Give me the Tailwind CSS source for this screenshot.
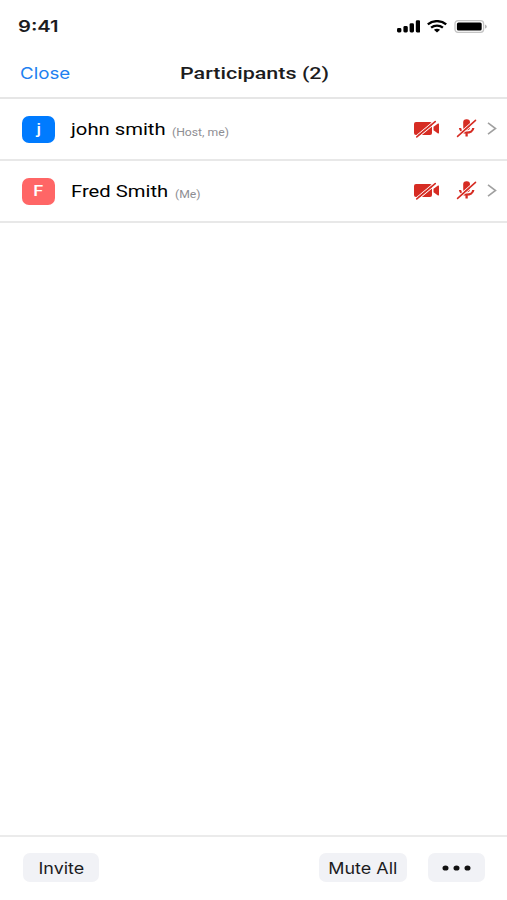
<!DOCTYPE html>
<html lang="en">
<head>
    <meta charset="UTF-8">
    <meta name="viewport" content="width=device-width, initial-scale=1.0">
    <title>Participants</title>
    <script src="https://cdn.jsdelivr.net/npm/@tailwindcss/browser@4"></script>
</head>
<body class="bg-white">
    <div class="flex flex-col w-full h-screen overflow-hidden bg-white font-[Roboto,sans-serif] text-[17px] text-[#1c1c1e]">
        <!-- Status bar -->
        <div class="flex items-center justify-between h-[53px] pl-[18px] pr-[19px] shrink-0">
            <span class="inline-block pb-[2px] origin-left scale-x-[1.26] font-[Inter,sans-serif] text-[16px] font-semibold">9:41</span>
            <div class="flex items-center gap-[7px]">
                <svg class="w-[23px] h-[13px]" viewBox="0 0 23 13" fill="#000">
                    <rect x="0" y="8" width="4.4" height="4.5" rx="1.4" />
                    <rect x="6.4" y="6" width="4.4" height="6.5" rx="1.4" />
                    <rect x="12.6" y="3.2" width="4.4" height="9.3" rx="1.4" />
                    <rect x="18.8" y="0.3" width="4.4" height="12.2" rx="1.4" />
                </svg>
                <svg class="w-[20px] h-[13px]" viewBox="0 0 20 13" fill="none" stroke="#000" stroke-width="2.3">
                    <path d="M0.8 4.4C6 0 14 0 19.2 4.4" />
                    <path d="M4.1 7.7C7.5 4.8 12.5 4.8 15.9 7.7" />
                    <path d="M6.9 9.8C8.8 8.4 11.2 8.4 13.1 9.8L10 12.6Z" fill="#000" stroke="none" />
                </svg>
                <svg class="w-[34px] h-[13px]" viewBox="0 0 34 13">
                    <rect x="1" y="0.7" width="28.6" height="11.6" rx="3" fill="none" stroke="#c4c4c4" stroke-width="1.3" />
                    <rect x="2.9" y="2.4" width="24.8" height="8.2" rx="1.6" fill="#000" />
                    <path d="M31 4.4C33.4 5.2 33.4 7.8 31 8.6Z" fill="#b5b5b5" />
                </svg>
            </div>
        </div>

        <!-- Title bar -->
        <div class="flex items-center h-[46px] pb-[3px] pl-5 shrink-0 border-b-2 border-[#e6e6e6]">
            <div class="w-40">
                <span class="inline-block origin-left scale-x-[1.17] font-[Inter,sans-serif] text-[16px] text-[#2080f0]">Close</span>
            </div>
            <h1 class="origin-left scale-x-[1.265] font-medium">Participants (2)</h1>
        </div>

        <!-- Participants list -->
        <ul class="grow">
            <li class="flex items-center h-[62px] pl-[22px] pr-[10px] border-b-2 border-[#e8e8e8]">
                <div class="flex items-center justify-center w-[33px] h-[27px] pt-px rounded-[7px] bg-[#007bff] text-white text-[15px] font-medium"><span class="scale-x-[1.2]">j</span></div>
                <div class="w-[117px] pl-4 pt-[2px]"><span class="inline-block whitespace-nowrap origin-left scale-x-[1.19] text-black">john smith</span></div>
                <div class="grow pt-[3px]"><span class="inline-block origin-left scale-x-[1.16] text-[10.5px] text-[#8e8e93]">(Host, me)</span></div>
                <svg class="w-[27px] h-5 mr-4 mb-[2px]" viewBox="0 0 27 20">
                    <rect x="1" y="4" width="18" height="13" rx="2" fill="#d62c23" />
                    <path d="M20.5 8.8L25 5.6Q26 5.2 26 6.2V14.8Q26 15.8 25 15.4L20.5 12.2Z" fill="#d62c23" />
                    <path d="M2.9 18.1L21.3 2.9M4.7 19.7L23.2 4.4" stroke="#fff" stroke-width="1.2" />
                    <path d="M3.8 18.9L22.2 3.6" stroke="#d62c23" stroke-width="1.6" stroke-linecap="round" />
                </svg>
                <svg class="w-[21px] h-5 mr-[10px] mb-[2px]" viewBox="0 0 21 20">
                    <rect x="7.2" y="1.2" width="6.8" height="11" rx="3.2" fill="#d62c23" />
                    <path d="M4 10C4.5 16.2 16.8 16.2 17.3 10M10.6 14.5V18.6" fill="none" stroke="#d62c23" stroke-width="2.3" />
                    <path d="M0.7 17.6L18.6 1.6M2.5 19.2L20.4 3.2" stroke="#fff" stroke-width="1.1" />
                    <path d="M1.6 18.4L19.5 2.4" stroke="#d62c23" stroke-width="1.6" stroke-linecap="round" />
                </svg>
                <svg class="w-[10px] h-[13px] mb-[2px]" viewBox="0 0 10 13" fill="none" stroke="#a0a0a0" stroke-width="1.6"><path d="M1 0.9L8.5 6.5L1 12.1" /></svg>
            </li>
            <li class="flex items-center h-[62px] pl-[22px] pr-[10px] border-b-2 border-[#e8e8e8]">
                <div class="flex items-center justify-center w-[33px] h-[27px] pt-px rounded-[7px] bg-[#ff6666] text-white text-[15px] font-medium"><span class="scale-x-[1.2]">F</span></div>
                <div class="w-[120px] pl-4 pt-[2px]"><span class="inline-block whitespace-nowrap origin-left scale-x-[1.19] text-black">Fred Smith</span></div>
                <div class="grow pt-[3px]"><span class="inline-block origin-left scale-x-[1.16] text-[10.5px] text-[#8e8e93]">(Me)</span></div>
                <svg class="w-[27px] h-5 mr-4 mb-[2px]" viewBox="0 0 27 20">
                    <rect x="1" y="4" width="18" height="13" rx="2" fill="#d62c23" />
                    <path d="M20.5 8.8L25 5.6Q26 5.2 26 6.2V14.8Q26 15.8 25 15.4L20.5 12.2Z" fill="#d62c23" />
                    <path d="M2.9 18.1L21.3 2.9M4.7 19.7L23.2 4.4" stroke="#fff" stroke-width="1.2" />
                    <path d="M3.8 18.9L22.2 3.6" stroke="#d62c23" stroke-width="1.6" stroke-linecap="round" />
                </svg>
                <svg class="w-[21px] h-5 mr-[10px] mb-[2px]" viewBox="0 0 21 20">
                    <rect x="7.2" y="1.2" width="6.8" height="11" rx="3.2" fill="#d62c23" />
                    <path d="M4 10C4.5 16.2 16.8 16.2 17.3 10M10.6 14.5V18.6" fill="none" stroke="#d62c23" stroke-width="2.3" />
                    <path d="M0.7 17.6L18.6 1.6M2.5 19.2L20.4 3.2" stroke="#fff" stroke-width="1.1" />
                    <path d="M1.6 18.4L19.5 2.4" stroke="#d62c23" stroke-width="1.6" stroke-linecap="round" />
                </svg>
                <svg class="w-[10px] h-[13px] mb-[2px]" viewBox="0 0 10 13" fill="none" stroke="#a0a0a0" stroke-width="1.6"><path d="M1 0.9L8.5 6.5L1 12.1" /></svg>
            </li>
        </ul>

        <!-- Footer actions -->
        <div class="flex items-start h-[65px] pt-[16px] pl-[23px] pr-[22px] shrink-0 border-t-2 border-[#ebebeb] font-[Inter,sans-serif] text-[16px]">
            <button class="flex items-center justify-center w-[76px] h-[29px] rounded-[7px] bg-[#f1f2f6] mr-auto"><span class="scale-x-[1.12]">Invite</span></button>
            <button class="flex items-center justify-center w-[88px] h-[29px] rounded-[7px] bg-[#f1f2f6] mr-[21px]"><span class="whitespace-nowrap scale-x-[1.12]">Mute All</span></button>
            <button class="flex items-center justify-center w-[57px] h-[29px] rounded-[7px] bg-[#f1f2f6]">
                <svg class="w-[29px] h-[6px]" viewBox="0 0 29 6" fill="#111"><ellipse cx="3.5" cy="3" rx="3" ry="2.6" /><ellipse cx="14.5" cy="3" rx="3" ry="2.6" /><ellipse cx="25.5" cy="3" rx="3" ry="2.6" /></svg>
            </button>
        </div>
    </div>
</body>
</html>
